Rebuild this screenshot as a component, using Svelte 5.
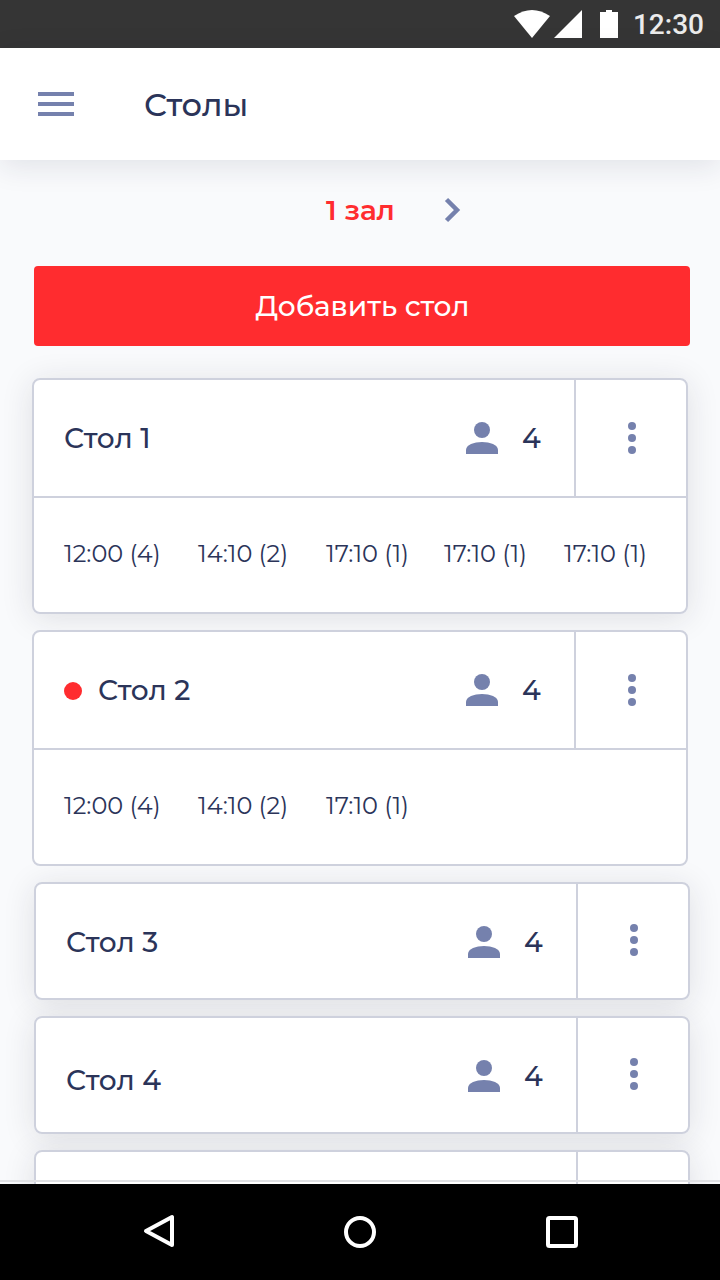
<script lang="ts">
	type Table = {
		name?: string;
		seats?: number;
		busy?: boolean;
		raised?: boolean;
		low?: boolean;
		bookings?: string[];
	};

	const hall = '1 зал';

	const tables: Table[] = [
		{
			name: 'Стол 1',
			seats: 4,
			raised: true,
			bookings: ['12:00 (4)', '14:10 (2)', '17:10 (1)', '17:10 (1)', '17:10 (1)']
		},
		{
			name: 'Стол 2',
			seats: 4,
			busy: true,
			bookings: ['12:00 (4)', '14:10 (2)', '17:10 (1)']
		},
		{ name: 'Стол 3', seats: 4, raised: true },
		{ name: 'Стол 4', seats: 4, raised: true, low: true },
		{ raised: true }
	];
</script>

<div class="screen">
	<div class="status-bar">
		<svg class="status-icons" width="104" height="28" viewBox="0 0 104 28" aria-hidden="true">
			<path d="M0 6Q18 -6 36 6L18 28z" />
			<path d="M68 0V28H40z" />
			<path d="M86 2h6V0h6v2h6v26H86z" />
		</svg>
		<span class="clock">12:30</span>
	</div>

	<header class="app-bar">
		<button class="menu-btn" aria-label="Меню">
			<span></span>
			<span></span>
			<span></span>
		</button>
		<h1>Столы</h1>
	</header>

	<main>
		<div class="hall">
			<span class="hall-name">{hall}</span>
			<button class="next-btn" aria-label="Следующий зал">
				<svg width="18" height="26" viewBox="0 0 18 26">
					<path d="M2.500 2.500L13 13L2.500 23.500" />
				</svg>
			</button>
		</div>

		<button class="add-btn"><span>Добавить стол</span></button>

		<div class="tables">
			{#each tables as table}
				<section class="card" class:raised={table.raised} class:compact={!table.bookings}>
					<div class="card-head">
						<div class="card-main">
							{#if table.busy}
								<span class="busy-dot"></span>
							{/if}
							{#if table.name}
								<h2 class:low={table.low}>{table.name}</h2>
								<svg class="person" width="32" height="32" viewBox="0 0 32 32" aria-hidden="true">
									<circle cx="16" cy="8" r="8" />
									<path d="M0 32V28C0 22.700 8 20 16 20S32 22.700 32 28V32z" />
								</svg>
								<span class="seats">{table.seats}</span>
							{/if}
						</div>
						<button class="more-btn" aria-label="Действия">
							<svg width="8" height="32" viewBox="0 0 8 32">
								<circle cx="4" cy="4" r="4" />
								<circle cx="4" cy="16" r="4" />
								<circle cx="4" cy="28" r="4" />
							</svg>
						</button>
					</div>
					{#if table.bookings}
						<div class="bookings">
							{#each table.bookings as booking}
								<span>{booking}</span>
							{/each}
						</div>
					{/if}
				</section>
			{/each}
		</div>
		<div class="bottom-line"></div>
	</main>

	<nav class="nav-bar">
		<svg width="34" height="38" viewBox="0 0 34 38">
			<path d="M30 4V32L4 18z" />
		</svg>
		<svg width="32" height="32" viewBox="0 0 32 32">
			<circle cx="16" cy="16" r="14" />
		</svg>
		<svg width="32" height="32" viewBox="0 0 32 32">
			<rect x="2" y="2" width="28" height="28" rx="1.500" />
		</svg>
	</nav>
</div>

<style>
	:global(body) {
		margin: 0;
	}

	.screen {
		--text: #2b3459;
		--icon: #7581ad;
		--line: #ced1dd;
		--accent: #ff2c2f;
		display: flex;
		flex-direction: column;
		width: 720px;
		height: 1280px;
		overflow: hidden;
		background: #f9fafc;
		color: var(--text);
		font-family: 'Montserrat', 'Inter', sans-serif;
		font-weight: 500;
	}

	h1,
	h2 {
		margin: 0;
		font-weight: 500;
	}

	button {
		padding: 0;
		border: none;
		background: none;
		font: inherit;
		color: inherit;
		cursor: pointer;
	}

	/* Status bar */
	.status-bar {
		display: flex;
		flex: none;
		align-items: center;
		justify-content: flex-end;
		gap: 15px;
		height: 48px;
		padding-right: 16px;
		background: #353535;
	}

	.status-icons {
		fill: #fff;
	}

	.clock {
		padding-top: 2px;
		font-family: 'Roboto', sans-serif;
		font-size: 28px;
		line-height: 46px;
		color: #ebebeb;
	}

	/* App bar */
	.app-bar {
		display: flex;
		flex: none;
		align-items: center;
		gap: 70px;
		height: 112px;
		padding-left: 38px;
		background: #fff;
		box-shadow: 0 6px 28px rgba(30, 35, 60, 0.11);
		z-index: 1;
	}

	.menu-btn {
		display: grid;
		gap: 6px;
		width: 36px;
	}

	.menu-btn span {
		height: 4px;
		background: var(--icon);
	}

	h1 {
		padding-top: 1px;
		font-size: 32px;
	}

	main {
		display: flex;
		flex: 1;
		flex-direction: column;
		min-height: 0;
		overflow: hidden;
	}

	/* Hall switcher */
	.hall {
		display: flex;
		flex: none;
		align-items: center;
		gap: 49px;
		height: 106px;
		padding: 0 0 6px 326px;
		box-sizing: border-box;
	}

	.hall-name {
		font-size: 28px;
		font-weight: 600;
		color: var(--accent);
	}

	.next-btn {
		display: flex;
	}

	.next-btn path {
		fill: none;
		stroke: var(--icon);
		stroke-width: 4.5;
	}

	.add-btn {
		flex: none;
		height: 80px;
		margin: 0 30px 32px 34px;
		padding-left: 1px;
		border-radius: 4px;
		background: var(--accent);
		color: #fff;
		font-size: 28px;
	}

	/* Table cards */
	.tables {
		display: flex;
		flex: 1;
		flex-direction: column;
		gap: 16px;
		min-height: 0;
		padding-left: 32px;
		position: relative;
		z-index: 0;
	}

	.card {
		position: relative;
		flex: none;
		width: 656px;
		height: 236px;
		border: 2px solid var(--line);
		border-radius: 8px;
		box-sizing: border-box;
		background: #fff;
	}

	/* shadows sit under every card, so neighbours stay white */
	.card.raised::before {
		content: '';
		position: absolute;
		inset: -2px;
		z-index: -1;
		border-radius: 8px;
		box-shadow: 0 4px 32px rgba(30, 35, 50, 0.12);
	}

	.card.compact {
		height: 118px;
		margin-left: 2px;
	}

	.card-head {
		display: flex;
		height: 116px;
	}

	.compact .card-head {
		height: 114px;
	}

	.card-main {
		display: flex;
		flex: 1;
		align-items: center;
		height: 116px;
		padding: 0 33px 0 30px;
	}

	.busy-dot {
		width: 18px;
		height: 18px;
		margin: 2px 16px 0 0;
		border-radius: 50%;
		background: var(--accent);
	}

	h2 {
		font-size: 28px;
	}

	h2.low {
		padding-top: 8px;
	}

	.person {
		margin-left: auto;
		fill: var(--icon);
	}

	.seats {
		width: 19px;
		margin-left: 24px;
		font-size: 28px;
	}

	.more-btn {
		display: flex;
		align-items: center;
		justify-content: center;
		width: 112px;
		padding-left: 2px;
		box-sizing: border-box;
		border-left: 2px solid var(--line);
	}

	.compact .more-btn {
		padding-bottom: 2px;
	}

	.more-btn svg {
		fill: var(--icon);
	}

	.bookings {
		display: grid;
		grid-template-columns: 134px 128px 118px 120px auto;
		align-items: center;
		height: 114px;
		padding: 0 0 1px 30px;
		box-sizing: border-box;
		border-top: 2px solid var(--line);
		font-size: 24px;
		font-weight: 400;
		white-space: nowrap;
	}

	.bottom-line {
		flex: none;
		height: 2px;
		margin: -4px 0 2px;
		background: #dfe0e3;
		z-index: 1;
	}

	/* System navigation */
	.nav-bar {
		display: flex;
		flex: none;
		align-items: center;
		justify-content: space-between;
		height: 96px;
		padding: 0 142px 0 140px;
		box-sizing: border-box;
		background: #000;
		z-index: 1;
	}

	.nav-bar svg {
		fill: none;
		stroke: #fff;
		stroke-width: 4;
		stroke-linejoin: round;
	}

	.nav-bar svg:first-child {
		margin-left: 2px;
	}

	.nav-bar svg:nth-child(2) {
		margin-right: 2px;
	}
</style>
